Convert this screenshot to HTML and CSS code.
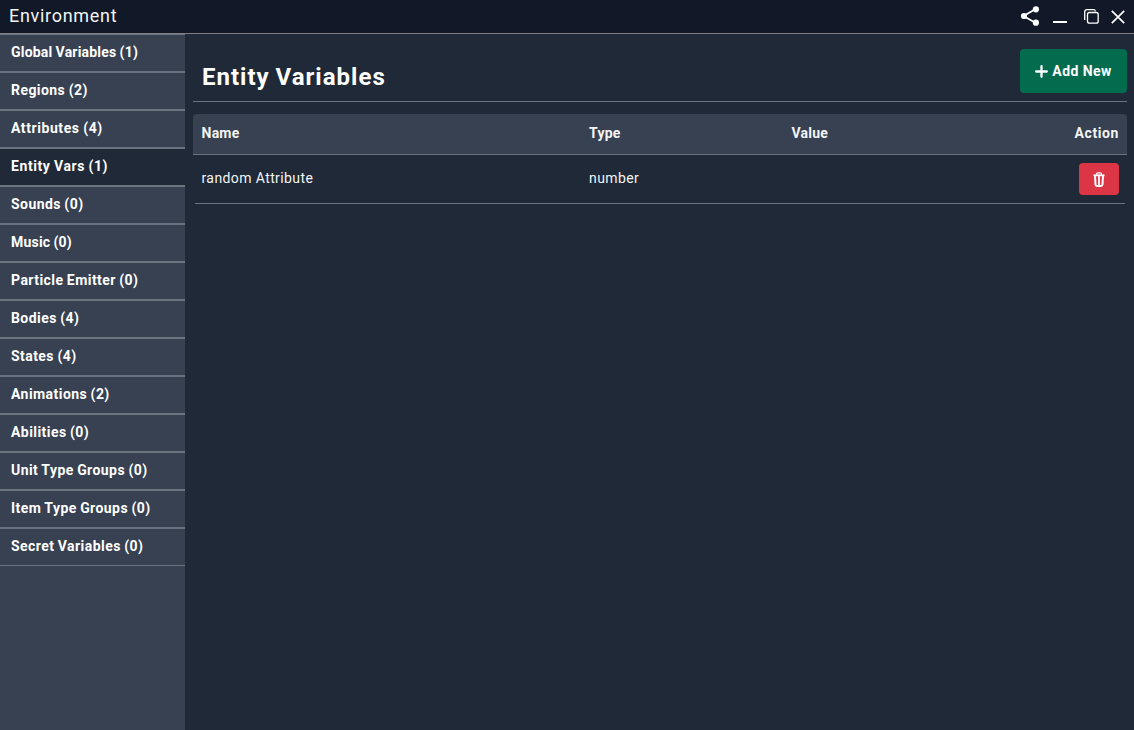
FILE: index.html
```html
<!DOCTYPE html>
<html lang="en">
<head>
<meta charset="utf-8">
<title>Environment</title>
<link rel="stylesheet" href="styles.css">
</head>
<body>
<div class="window">
  <header class="titlebar">
    <span class="title">Environment</span>
    <div class="controls">
      <svg class="share" width="20" height="20" viewBox="0 0 20 20"><path d="M15.3 3.2L3.5 10l11.8 6.8" fill="none" stroke="#fff" stroke-width="1.8"/><circle cx="15.9" cy="3.3" r="3.1" fill="#fff"/><circle cx="4" cy="10" r="3.1" fill="#fff"/><circle cx="15.9" cy="16.7" r="3.1" fill="#fff"/></svg>
      <svg class="minimize" width="14" height="20" viewBox="0 0 14 20"><path d="M0 15h14v2H0z" fill="#fff"/></svg>
      <svg class="restore" width="15" height="15" viewBox="0 0 15 15" fill="none" stroke="#fff" stroke-width="1.3"><rect x="3.5" y="3.5" width="10.7" height="10.7" rx="2"/><path d="M.7 11V3Q.7.7 3 .7h6.500q1.500 0 2 1.700"/></svg>
      <svg class="close" width="14" height="14" viewBox="0 0 14 14"><path d="M.8.8l12.400 12.400M13.200.8L.8 13.200" fill="none" stroke="#fff" stroke-width="1.700"/></svg>
    </div>
  </header>
  <div class="body">
    <nav class="sidebar">
      <a class="item snug"><span>Global Variables (1)</span></a>
      <a class="item"><span>Regions (2)</span></a>
      <a class="item wide"><span>Attributes (4)</span></a>
      <a class="item active wide"><span>Entity Vars (1)</span></a>
      <a class="item"><span>Sounds (0)</span></a>
      <a class="item snug"><span>Music (0)</span></a>
      <a class="item"><span>Particle Emitter (0)</span></a>
      <a class="item"><span>Bodies (4)</span></a>
      <a class="item"><span>States (4)</span></a>
      <a class="item"><span>Animations (2)</span></a>
      <a class="item"><span>Abilities (0)</span></a>
      <a class="item"><span>Unit Type Groups (0)</span></a>
      <a class="item"><span>Item Type Groups (0)</span></a>
      <a class="item"><span>Secret Variables (0)</span></a>
    </nav>
    <main class="content">
      <div class="heading">
        <h1>Entity Variables</h1>
        <button class="add"><svg width="13" height="13" viewBox="0 0 13 13"><path d="M6.500 1.200v10.600M1.200 6.500h10.600" stroke="#fff" stroke-width="2.300" stroke-linecap="round"/></svg><span>Add New</span></button>
      </div>
      <div class="row head"><span>Name</span><span>Type</span><span>Value</span><span class="end">Action</span></div>
      <div class="row entry">
        <span>random Attribute</span><span>number</span><span></span>
        <button class="delete"><svg width="12" height="15" viewBox="0 0 12 15" fill="none" stroke="#fff"><path d="M.5 3.300h11" stroke-width="1.800"/><path d="M3.300 2.700q.2-1.900 1.700-1.900h2q1.500 0 1.700 1.900" stroke-width="1.300"/><path d="M2 3.500l.5 9q.1 1.500 1.500 1.500h4q1.400 0 1.500-1.500l.5-9" stroke-width="2"/><path d="M6 4v9.500" stroke-width="1.800"/></svg></button>
      </div>
    </main>
  </div>
</div>
</body>
</html>
```
FILE: styles.css
```css
* { box-sizing: border-box; }
body { margin: 0; font-family: Roboto, sans-serif; color: #fff; background: #1f2937; }
.window { height: 730px; display: flex; flex-direction: column; overflow: hidden; }
.titlebar { flex: none; height: 34px; padding: 0 9px; display: flex; align-items: center; justify-content: space-between; background: #111827; border-bottom: 1px solid #808080; }
.title { font-size: 18px; line-height: 24px; letter-spacing: .7px; color: #f3f4f6; margin-top: -1px; }
.controls { display: flex; align-items: center; }
.controls svg { display: block; }
.share { margin-top: -1px; }
.minimize { margin: -1px 17px 0 13px; }
.restore { margin-right: 12px; }
.body { flex: 1; display: flex; min-height: 0; }
.sidebar { width: 185px; background: #374151; }
.item { display: block; height: 38px; padding: 7px 11px 0; border: solid #6b7280; border-width: 1px 0; font-size: 14px; font-weight: 700; line-height: 20px; letter-spacing: .44px; word-spacing: -.5px; white-space: nowrap; }
.wide { letter-spacing: .58px; }
.snug { letter-spacing: .2px; }
.active { background: #1f2937; }
.content { flex: 1; padding: 8px 7px 0 8px; }
.heading { height: 60px; margin-bottom: 12px; padding-left: 9px; display: flex; justify-content: space-between; border-bottom: 1px solid #6b7280; }
h1 { margin: 19px 0 0; font-size: 24px; font-weight: 700; line-height: 32px; letter-spacing: 1px; word-spacing: -1px; }
button { border: 0; color: #fff; font-family: inherit; font-size: 14px; font-weight: 700; display: flex; align-items: center; justify-content: center; padding: 0; }
.add { margin-top: 7px; width: 107px; height: 44px; gap: 4px; border-radius: 4px; background: #046c4e; letter-spacing: .42px; }
.add span { margin-top: -1px; }
.row { display: grid; grid-template-columns: 387.500px 202.500px 1fr auto; font-size: 14px; line-height: 20px; letter-spacing: .4px; border-bottom: 1px solid #6b7280; }
.head { height: 41px; padding: 9px 8px 0 8.500px; font-weight: 700; letter-spacing: .25px; color: #f3f4f6; background: #374151; border-radius: 4px 4px 0 0; }
.end { letter-spacing: .6px; }
.entry { height: 49px; margin: 0 2px; padding: 8px 6px 0 6.500px; color: #f3f4f6; }
.entry span { padding-top: 5px; }
.delete { width: 40px; height: 32px; border-radius: 4px; background: #dc3545; }
```
